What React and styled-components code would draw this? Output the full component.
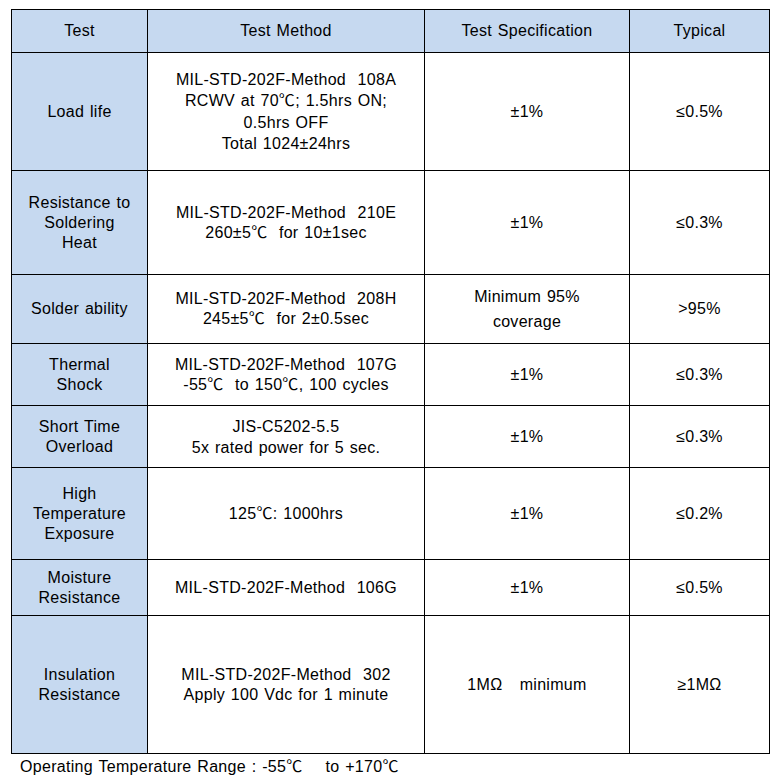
import React from "react";
import styled, { createGlobalStyle } from "styled-components";

const Global = createGlobalStyle`
  html, body { margin: 0; padding: 0; background: #fff; }
  body { font-family: "Liberation Sans", "Noto Sans CJK KR", Arial, sans-serif; color: #000; }
`;

const Page = styled.div`
  padding: 9px 0 0 11px;
  width: 776px;
  box-sizing: border-box;
`;

const Table = styled.table`
  border-collapse: collapse;
  table-layout: fixed;
  width: 758px;
  font-size: 16px;
  line-height: 20px;
  letter-spacing: 0.3px;
  word-spacing: 1px;
`;

const Col = styled.col`
  width: ${(p) => p.$w}px;
`;

const Row = styled.tr`
  height: ${(p) => p.$h}px;
`;

const HeadCell = styled.th`
  background: #c6d9f0;
  border: 1px solid #000;
  font-weight: normal;
  text-align: center;
  vertical-align: middle;
  padding: 0 2px;
  white-space: pre-wrap;
`;

const LabelCell = styled.td`
  background: #c6d9f0;
  border: 1px solid #000;
  text-align: center;
  vertical-align: middle;
  padding: 0 2px;
  white-space: pre-wrap;
`;

const Cell = styled.td`
  border: 1px solid #000;
  text-align: center;
  vertical-align: middle;
  padding: 0 2px;
  white-space: pre-wrap;
  line-height: ${(p) => p.$lh || 20}px;
`;

const Footer = styled.div`
  font-size: 16px;
  letter-spacing: 0.3px;
  word-spacing: 1px;
  white-space: pre;
  padding: 4px 0 0 9px;
  line-height: 18px;
`;

const rows = [
  { h: 118, label: ["Load life"], method: ["MIL-STD-202F-Method  108A", "RCWV at 70\u2103; 1.5hrs ON;", "0.5hrs OFF", "Total 1024\u00b124hrs"], mlh: 21.5, spec: ["\u00b11%"], typ: "\u22640.5%" },
  { h: 104, label: ["Resistance to", "Soldering", "Heat"], method: ["MIL-STD-202F-Method  210E", "260\u00b15\u2103  for 10\u00b11sec"], spec: ["\u00b11%"], typ: "\u22640.3%" },
  { h: 69, label: ["Solder ability"], method: ["MIL-STD-202F-Method  208H", "245\u00b15\u2103  for 2\u00b10.5sec"], spec: ["Minimum 95%", "coverage"], slh: 25, typ: ">95%" },
  { h: 62, label: ["Thermal", "Shock"], method: ["MIL-STD-202F-Method  107G", "-55\u2103  to 150\u2103, 100 cycles"], spec: ["\u00b11%"], typ: "\u22640.3%" },
  { h: 62, label: ["Short Time", "Overload"], method: ["JIS-C5202-5.5", "5x rated power for 5 sec."], mlh: 21, spec: ["\u00b11%"], typ: "\u22640.3%" },
  { h: 92, label: ["High", "Temperature", "Exposure"], method: ["125\u2103: 1000hrs"], spec: ["\u00b11%"], typ: "\u22640.2%" },
  { h: 56, label: ["Moisture", "Resistance"], method: ["MIL-STD-202F-Method  106G"], spec: ["\u00b11%"], typ: "\u22640.5%" },
  { h: 138, label: ["Insulation", "Resistance"], method: ["MIL-STD-202F-Method  302", "Apply 100 Vdc for 1 minute"], spec: ["1M\u03a9   minimum"], typ: "\u22651M\u03a9" },
];

const Lines = ({ items }) =>
  items.map((t, i) => (
    <React.Fragment key={i}>
      {i > 0 && <br />}
      {t}
    </React.Fragment>
  ));

export default function App() {
  return (
    <Page>
      <Global />
      <Table>
        <colgroup>
          <Col $w={136} />
          <Col $w={277} />
          <Col $w={205} />
          <Col $w={140} />
        </colgroup>
        <thead>
          <Row $h={43}>
            <HeadCell>Test</HeadCell>
            <HeadCell>Test Method</HeadCell>
            <HeadCell>Test Specification</HeadCell>
            <HeadCell>Typical</HeadCell>
          </Row>
        </thead>
        <tbody>
          {rows.map((r, i) => (
            <Row key={i} $h={r.h}>
              <LabelCell>
                <Lines items={r.label} />
              </LabelCell>
              <Cell $lh={r.mlh}>
                <Lines items={r.method} />
              </Cell>
              <Cell $lh={r.slh}>
                <Lines items={r.spec} />
              </Cell>
              <Cell>{r.typ}</Cell>
            </Row>
          ))}
        </tbody>
      </Table>
      <Footer>{"Operating Temperature Range : -55\u2103    to +170\u2103"}</Footer>
    </Page>
  );
}
